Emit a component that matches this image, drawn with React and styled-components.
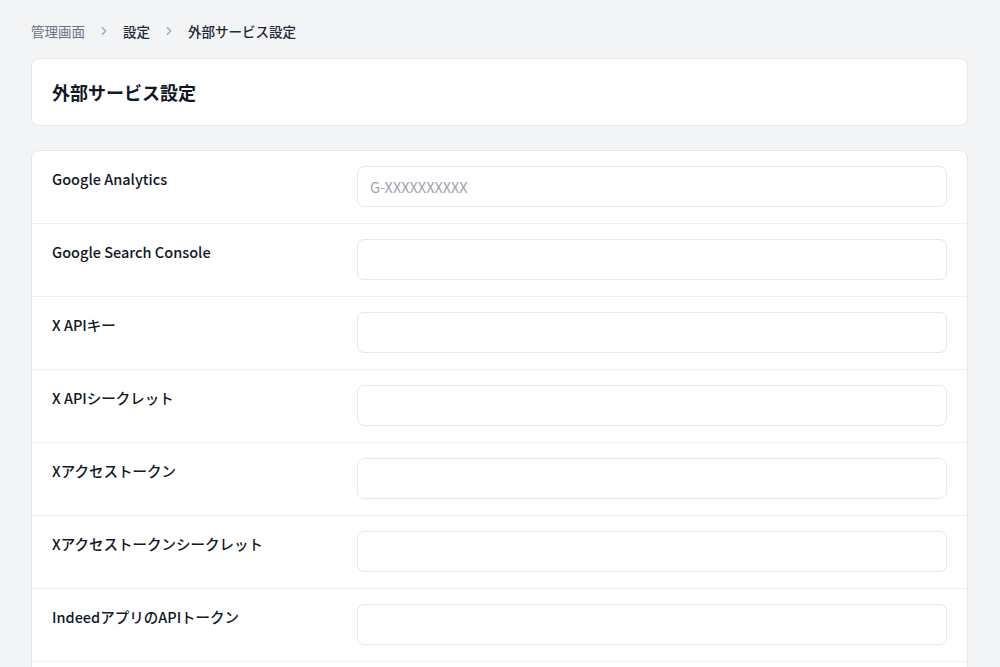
import React from "react";
import styled, { createGlobalStyle } from "styled-components";

const Global = createGlobalStyle`
  html, body { margin: 0; background: #f3f4f6; }
  body { font-family: "Noto Sans CJK JP", "Noto Sans", sans-serif; color: #111827; }
  * { box-sizing: border-box; }
`;

const Page = styled.div`
  padding: 19px 32px 0 31px;
  display: flex; flex-direction: column;
`;
const Crumbs = styled.nav`
  display: flex; align-items: center; gap: 12px; font-size: 13.5px; height: 24px; margin-bottom: 15px;
`;
const Crumb = styled.span`
  color: ${p => (p.$muted ? "#6b7280" : "#1f2937")};
  font-weight: ${p => (p.$muted ? 400 : 500)};
`;
const Sep = styled.span`
  color: #9ca3af; display: flex;
`;
const Card = styled.div`
  background: #fff; border: 1px solid #e5e7eb; border-radius: 8px;
`;
const HeaderCard = styled(Card)`
  height: 68px; display: flex; align-items: center; padding: 0 20px; margin-bottom: 24px;
`;
const Title = styled.h1`
  margin: 0; font-size: 18px; font-weight: 700;
`;
const Row = styled.div`
  display: grid; grid-template-columns: 285px 1fr; gap: 20px;
  padding: 15px 20px 0; height: ${p => (p.$first ? "72px" : "73px")};
  border-top: ${p => (p.$first ? "none" : "1px solid #eef0f3")};
`;
const Label = styled.label`
  font-size: 14.5px; font-weight: 500; padding-top: 2px; color: #111827;
`;
const Input = styled.input`
  height: 41px; border: 1px solid #e5e7eb; border-radius: 7px; padding: 0 12px;
  font-size: 14.5px; font-family: inherit; outline: none;
  &::placeholder { color: #9ca3af; }
`;

const Chevron = () => (
  <svg width="14" height="14" viewBox="0 0 24 24" fill="none" stroke="currentColor" strokeWidth="2" strokeLinecap="round" strokeLinejoin="round"><path d="m9 6 6 6-6 6" /></svg>
);

const fields = [
  ["Google Analytics", "G-XXXXXXXXXX"],
  ["Google Search Console", ""],
  ["X APIキー", ""],
  ["X APIシークレット", ""],
  ["Xアクセストークン", ""],
  ["Xアクセストークンシークレット", ""],
  ["IndeedアプリのAPIトークン", ""],
];

export default function App() {
  return (
    <>
      <Global />
      <Page>
        <Crumbs>
          <Crumb $muted>管理画面</Crumb><Sep><Chevron /></Sep>
          <Crumb>設定</Crumb><Sep><Chevron /></Sep>
          <Crumb>外部サービス設定</Crumb>
        </Crumbs>
        <HeaderCard><Title>外部サービス設定</Title></HeaderCard>
        <Card>
          {fields.map(([l, ph], i) => (
            <Row key={l} $first={i === 0}>
              <Label>{l}</Label>
              <Input placeholder={ph} />
            </Row>
          ))}
          <Row />
        </Card>
      </Page>
    </>
  );
}
